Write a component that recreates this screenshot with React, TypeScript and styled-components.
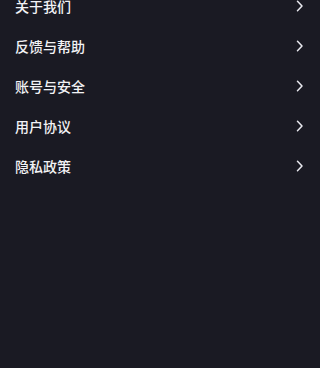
import React from "react";
import styled, { createGlobalStyle } from "styled-components";

const Global = createGlobalStyle`
  html, body { margin: 0; padding: 0; background: #1a1a23; }
  body { font-family: "Noto Sans CJK SC", "Noto Sans", sans-serif; }
`;

const Page = styled.div`
  width: 320px;
  height: 368px;
  background: #1a1a23;
  overflow: hidden;
`;

const List = styled.ul`
  list-style: none;
  margin: -14px 0 0;
  padding: 0;
`;

const Row = styled.li`
  height: 40px;
  display: flex;
  align-items: center;
  justify-content: space-between;
  padding: 0 16px 0 15px;
`;

const Label = styled.span`
  color: #f2f2f5;
  font-size: 14px;
  font-weight: 500;
  line-height: 1;
`;

const Chevron = () => (
  <svg width="8" height="12" viewBox="0 0 8 12" fill="none">
    <path d="M1.5 1.2 L6 6 L1.5 10.8" stroke="#e8e8ee" strokeWidth="1.5" strokeLinecap="round" strokeLinejoin="round" />
  </svg>
);

const items = ["关于我们", "反馈与帮助", "账号与安全", "用户协议", "隐私政策"];

export default function App() {
  return (
    <Page>
      <Global />
      <List>
        {items.map((t) => (
          <Row key={t}>
            <Label>{t}</Label>
            <Chevron />
          </Row>
        ))}
      </List>
    </Page>
  );
}
